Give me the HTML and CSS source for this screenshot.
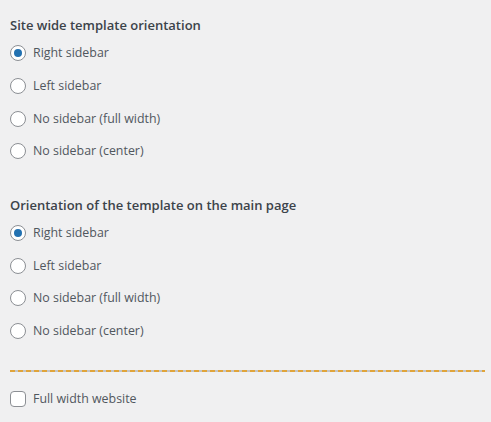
FILE: index.html
```html
<!DOCTYPE html>
<html>
<head>
<meta charset="utf-8">
<link rel="stylesheet" href="styles.css">
</head>
<body>
<div class="panel">
  <section class="group">
    <h3 class="title">Site wide template orientation</h3>
    <label class="opt"><span class="radio checked"></span><span class="txt">Right sidebar</span></label>
    <label class="opt"><span class="radio"></span><span class="txt">Left sidebar</span></label>
    <label class="opt"><span class="radio"></span><span class="txt">No sidebar (full width)</span></label>
    <label class="opt"><span class="radio"></span><span class="txt">No sidebar (center)</span></label>
  </section>
  <section class="group second">
    <h3 class="title">Orientation of the template on the main page</h3>
    <label class="opt"><span class="radio checked"></span><span class="txt">Right sidebar</span></label>
    <label class="opt"><span class="radio"></span><span class="txt">Left sidebar</span></label>
    <label class="opt"><span class="radio"></span><span class="txt">No sidebar (full width)</span></label>
    <label class="opt"><span class="radio"></span><span class="txt">No sidebar (center)</span></label>
  </section>
  <div class="divider"></div>
  <label class="opt check-row"><span class="check"></span><span class="txt">Full width website</span></label>
</div>
</body>
</html>
```
FILE: styles.css
```css
html, body {
  margin: 0;
  padding: 0;
  background: #f0f0f1;
}
body {
  font-family: "Open Sans", "Noto Sans", sans-serif;
  font-size: 12.4px;
  color: #50575e;
}
.panel {
  padding: 15px 6px 0 10px;
  display: flex;
  flex-direction: column;
}
.group {
  display: flex;
  flex-direction: column;
}
.second {
  margin-top: 27px;
}
.title {
  margin: 0 0 2px 0;
  font-size: 13px;
  font-weight: 600;
  color: #3c434a;
  line-height: 20px;
}
.opt {
  display: flex;
  align-items: center;
  gap: 7px;
  height: 32.7px;
}
.radio {
  width: 14px;
  height: 14px;
  border: 1px solid #8c8f94;
  border-radius: 50%;
  background: #fff;
  display: flex;
  align-items: center;
  justify-content: center;
  flex: none;
}
.radio.checked::after {
  content: "";
  width: 8px;
  height: 8px;
  border-radius: 50%;
  background: #2271b1;
}
.txt {
  line-height: 16px;
}
.divider {
  margin-top: 22px;
  height: 2px;
  background: repeating-linear-gradient(to right, #e0a43a 0 5px, #c3c4c7 5px 8px);
}
.check-row {
  margin-top: 11px;
}
.check {
  width: 14px;
  height: 14px;
  border: 1px solid #8c8f94;
  border-radius: 4px;
  background: #fff;
  flex: none;
}
```
